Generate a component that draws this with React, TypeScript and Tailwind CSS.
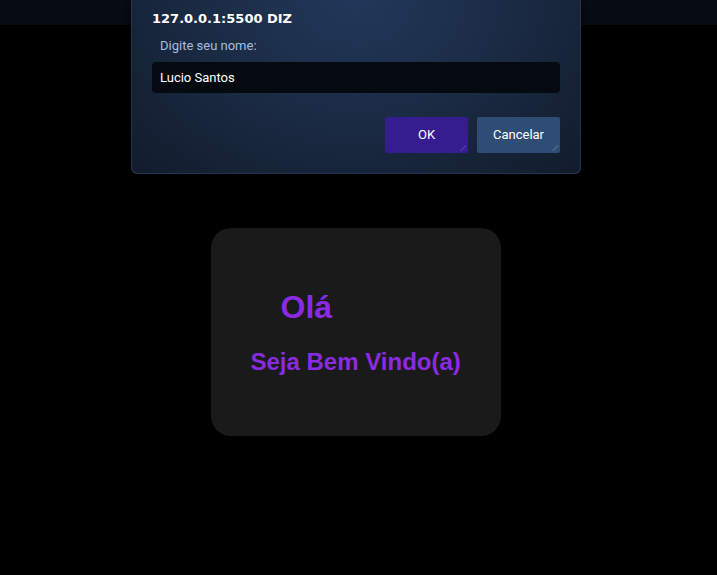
export default function App() {
  return (
    <div className="relative min-h-[575px] w-full bg-black font-['Liberation_Sans',Arial,sans-serif]">
      <div className="h-[25px] w-full bg-[#070b12]" />

      <div className="flex justify-center pr-[6px] pt-[203px]">
        <div className="flex h-[208px] w-[290px] flex-col rounded-[20px] bg-[#1a1a1a] px-[40px] pt-[61px]">
          <h1 className="pl-[30px] text-[32px] font-bold leading-[36px] text-[#8a2be2]">Olá</h1>
          <h2 className="mt-[23px] whitespace-nowrap text-[24px] font-bold leading-[28px] text-[#8a2be2]">Seja Bem Vindo(a)</h2>
        </div>
      </div>

      <div className="absolute left-[131px] top-0 h-[174px] w-[450px] rounded-b-[6px] border border-t-0 border-[#24344e] bg-[radial-gradient(ellipse_at_50%_0%,#22385a_0%,#1b2c46_45%,#121c2b_100%)] px-[20px] pt-[10px] shadow-[0_2px_6px_rgba(0,0,0,0.6)]">
        <div className="font-['DejaVu_Sans',sans-serif] text-[13px] font-bold leading-[18px] text-white">
          127.0.0.1:5500 DIZ
        </div>
        <div className="mt-[11px] pl-[8px] font-['Roboto',sans-serif] text-[13px] leading-[14px] text-[#a9bedf]">Digite seu nome:</div>
        <div className="mt-[9px] flex h-[31px] items-center rounded-[4px] bg-[#050910] px-[8px] font-['Roboto',sans-serif] text-[13px] text-white">
          Lucio Santos
        </div>
        <div className="mt-[24px] flex justify-end gap-[9px] font-['Roboto',sans-serif]">
          <button className="relative h-[36px] w-[83px] rounded-[2px] bg-[#351c8f] text-[13px] text-white">
            OK
            <span className="absolute bottom-[2px] right-[2px] h-[6px] w-[6px] bg-[linear-gradient(135deg,transparent_45%,#4a3a9a_45%,#4a3a9a_60%,transparent_60%)]" />
          </button>
          <button className="relative h-[36px] w-[83px] rounded-[2px] bg-[#2f4c75] text-[13px] text-white">
            Cancelar
            <span className="absolute bottom-[2px] right-[2px] h-[6px] w-[6px] bg-[linear-gradient(135deg,transparent_45%,#4d6689_45%,#4d6689_60%,transparent_60%)]" />
          </button>
        </div>
      </div>
    </div>
  );
}
